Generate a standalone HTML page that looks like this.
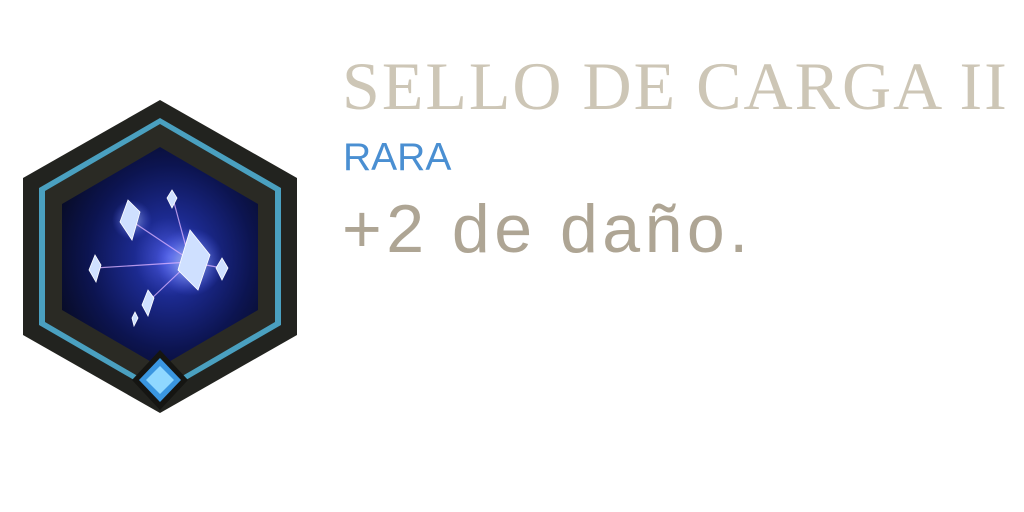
<!DOCTYPE html>
<html><head><style>
html,body{margin:0;padding:0;background:#fff;width:1024px;height:512px;overflow:hidden}
.t{position:absolute;white-space:nowrap}
#t1{left:342px;top:46px;font-family:"Liberation Serif",serif;font-size:68px;color:#cdc6b6;letter-spacing:2px;line-height:80px}
#t2{left:343px;top:138px;font-family:"Liberation Sans",sans-serif;font-size:39px;color:#4a8fd2;line-height:40px}
#t3{left:342px;top:194px;font-family:"Liberation Sans",sans-serif;font-size:68px;color:#aea594;letter-spacing:4.5px;line-height:70px}
</style></head><body>
<svg width="320" height="512" style="position:absolute;left:0;top:0">
<defs>
<radialGradient id="sp" cx="55%" cy="50%" r="60%">
<stop offset="0" stop-color="#4a58e0"/><stop offset="0.3" stop-color="#1c2a90"/><stop offset="0.7" stop-color="#0c1450"/><stop offset="1" stop-color="#080c28"/></radialGradient>
<radialGradient id="gl" cx="50%" cy="50%" r="50%"><stop offset="0" stop-color="#e8f0ff"/><stop offset="0.4" stop-color="#9ab0ff" stop-opacity=".8"/><stop offset="1" stop-color="#5060ff" stop-opacity="0"/></radialGradient>
</defs>
<polygon points="160,100 297,178 297,335 160,413 23,335 23,178" fill="#22231f"/>
<polygon points="160,118 281,188 281,325 160,395 39,325 39,188" fill="#4aa0c0"/>
<polygon points="160,124 275,191 275,322 160,389 45,322 45,191" fill="#2a2a24"/>
<polygon points="160,147 258,204 258,310 160,367 62,310 62,204" fill="url(#sp)"/>
<circle cx="190" cy="262" r="34" fill="url(#gl)" opacity=".7"/>
<circle cx="132" cy="220" r="20" fill="url(#gl)" opacity=".5"/>
<g stroke="#d8b0ff" stroke-width="1.2" opacity=".8">
<line x1="130" y1="220" x2="190" y2="260"/><line x1="95" y1="268" x2="190" y2="262"/><line x1="150" y1="300" x2="190" y2="262"/><line x1="172" y1="195" x2="190" y2="262"/><line x1="190" y1="262" x2="222" y2="268"/></g>
<g fill="#cfe0ff" stroke="#ffffff" stroke-width=".8">
<polygon points="190,230 210,255 198,290 178,270"/>
<polygon points="128,200 140,212 132,240 120,222"/>
<polygon points="95,255 101,265 96,282 89,270"/>
<polygon points="148,290 154,298 148,316 142,305"/>
<polygon points="172,190 177,198 172,208 167,198"/>
<polygon points="222,258 228,268 222,280 216,268"/>
<polygon points="135,312 138,318 134,326 132,318"/>
</g>
<polygon points="160,350 188,380 160,410 132,380" fill="#151512"/>
<polygon points="160,358 181,380 160,402 139,380" fill="#3a96e0"/>
<polygon points="160,366 174,380 160,394 146,380" fill="#8fd8ff"/>
</svg>
<div class="t" id="t1">SELLO DE CARGA II</div>
<div class="t" id="t2">RARA</div>
<div class="t" id="t3">+2 de daño.</div>
</body></html>
